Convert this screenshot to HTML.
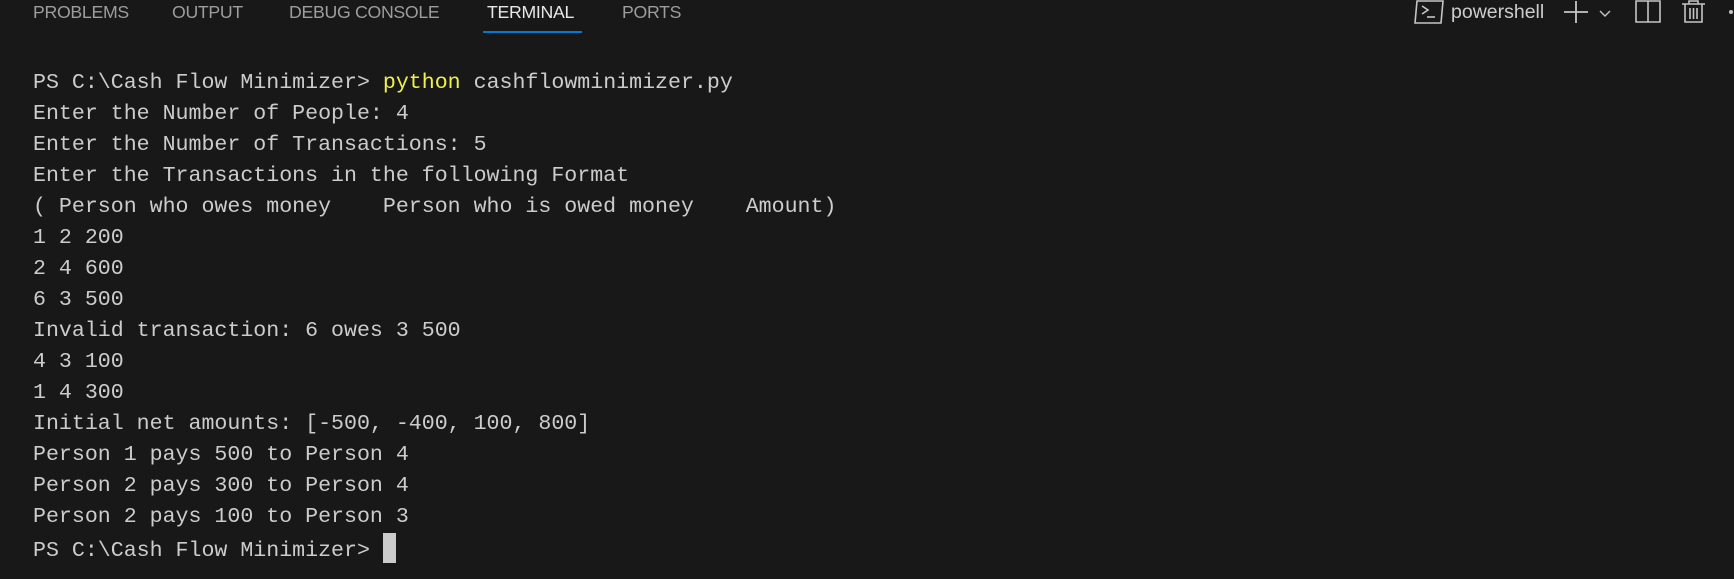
<!DOCTYPE html>
<html><head><meta charset="utf-8"><style>
body{margin:0;width:1734px;height:579px;background:#181818;overflow:hidden;position:relative;font-family:"Liberation Sans",sans-serif}
.tab{position:absolute;top:2px;font-size:17.7px;color:#9d9d9d;letter-spacing:-0.3px;white-space:nowrap}
.term{position:absolute;left:33px;top:68px;font-family:"Liberation Mono",monospace;font-size:21.6px;line-height:31px;color:#cccccc;white-space:pre}
.y{color:#f1f14c}
.cur{display:inline-block;width:13px;height:30px;background:#cccccc;vertical-align:-7px}
</style></head><body>
<div class="tab" style="left:33px">PROBLEMS</div>
<div class="tab" style="left:172px">OUTPUT</div>
<div class="tab" style="left:289px">DEBUG CONSOLE</div>
<div class="tab" style="left:487px;color:#e7e7e7">TERMINAL</div>
<div class="tab" style="left:622px">PORTS</div>
<div style="position:absolute;left:483px;top:31px;width:99px;height:2px;background:#0078d4"></div>

<svg style="position:absolute;left:1412px;top:0" width="34" height="26" viewBox="0 0 34 26" fill="none" stroke="#c5c5c5" stroke-width="1.6">
<path d="M5 1 H31 L29 23 H3 Z"/><path d="M10 6 L16 10 L10 14"/><path d="M15 17 H23"/></svg>
<div style="position:absolute;left:1451px;top:1px;font-size:19.5px;color:#cccccc">powershell</div>
<svg style="position:absolute;left:1562px;top:1px" width="60" height="26" viewBox="0 0 60 26" fill="none" stroke="#c5c5c5" stroke-width="1.8">
<path d="M14 0 V22 M2 11 H26"/><path d="M38 10 L43 15 L48 10" stroke-width="1.4"/></svg>
<svg style="position:absolute;left:1634px;top:0" width="80" height="26" viewBox="0 0 80 26" fill="none" stroke="#c5c5c5" stroke-width="1.6">
<path d="M2 1 H26 V22 H2 Z M14 1 V22"/>
<path d="M48 4 H71 M55 4 V1 H64 V4 M51 4 V22 H68 V4 M56 8 V19 M59.5 8 V19 M63 8 V19"/></svg>
<div style="position:absolute;left:1729px;top:10px;width:4px;height:4px;border-radius:2px;background:#c5c5c5"></div>

<div class="term">PS C:\Cash Flow Minimizer&gt; <span class="y">python</span> cashflowminimizer.py
Enter the Number of People: 4
Enter the Number of Transactions: 5
Enter the Transactions in the following Format
( Person who owes money    Person who is owed money    Amount)
1 2 200
2 4 600
6 3 500
Invalid transaction: 6 owes 3 500
4 3 100
1 4 300
Initial net amounts: [-500, -400, 100, 800]
Person 1 pays 500 to Person 4
Person 2 pays 300 to Person 4
Person 2 pays 100 to Person 3
PS C:\Cash Flow Minimizer&gt; <span class="cur"></span></div>
</body></html>
